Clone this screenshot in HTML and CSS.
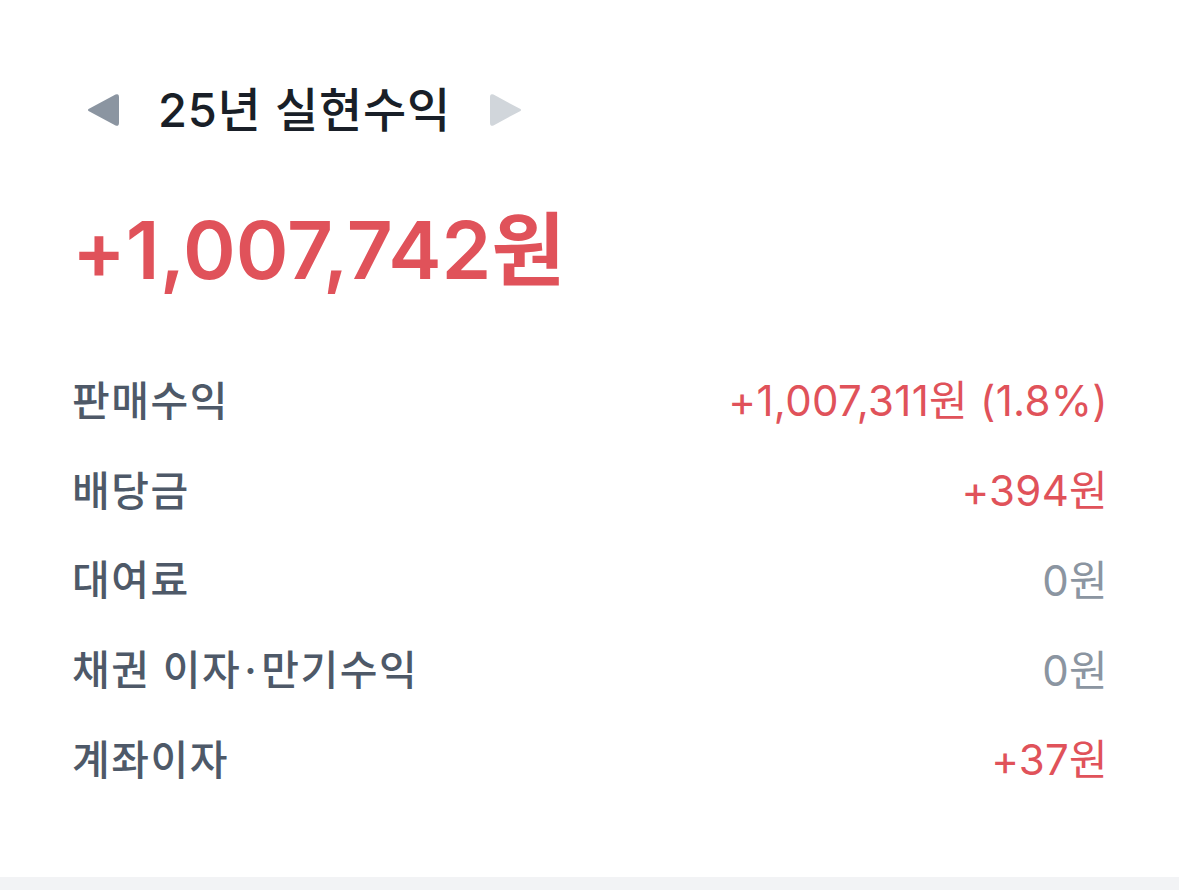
FILE: index.html
```html
<!DOCTYPE html>
<html lang="ko">
<head>
<meta charset="utf-8">
<link rel="stylesheet" href="styles.css">
</head>
<body>
<div class="card">
  <div class="header">
    <button class="nav prev" aria-label="이전">
      <svg width="34" height="36" viewBox="0 0 34 36"><path d="M3 18 L30 3.5 Q32 2.5 32 5 L32 31 Q32 33.5 30 32.5 Z" fill="#8b95a1" stroke="#8b95a1" stroke-width="2" stroke-linejoin="round"/></svg>
    </button>
    <h1 class="title">25년 실현수익</h1>
    <button class="nav next" aria-label="다음">
      <svg width="34" height="36" viewBox="0 0 34 36"><path d="M31 18 L4 3.5 Q2 2.5 2 5 L2 31 Q2 33.5 4 32.5 Z" fill="#d1d6db" stroke="#d1d6db" stroke-width="2" stroke-linejoin="round"/></svg>
    </button>
  </div>
  <div class="total">+1,007,742원</div>
  <ul class="rows">
    <li class="row"><span class="label">판매수익</span><span class="value plus">+1,007,311원 (1.8%)</span></li>
    <li class="row"><span class="label">배당금</span><span class="value plus">+394원</span></li>
    <li class="row"><span class="label">대여료</span><span class="value zero">0원</span></li>
    <li class="row"><span class="label">채권 이자<span class="dot">·</span>만기수익</span><span class="value zero">0원</span></li>
    <li class="row"><span class="label">계좌이자</span><span class="value plus">+37원</span></li>
  </ul>
</div>
<div class="footer-band"></div>
</body>
</html>
```
FILE: styles.css
```css
html, body {
  margin: 0;
  padding: 0;
  background: #ffffff;
}
body {
  font-family: "Inter", "Noto Sans CJK KR", sans-serif;
  width: 1179px;
  height: 890px;
  overflow: hidden;
  display: flex;
  flex-direction: column;
}
.card {
  height: 877px;
  box-sizing: border-box;
  padding: 78px 71px 0 72px;
}
.header {
  display: flex;
  align-items: center;
  margin-left: 14px;
}
.nav {
  border: 0;
  background: none;
  padding: 0;
  display: flex;
  align-items: center;
}
.title {
  margin: 0 0 0 38px;
  font-size: 47px;
  font-weight: 500;
  color: #191f28;
  line-height: 64px;
  letter-spacing: 0.8px;
}
.next {
  margin-left: 38px;
}
.total {
  margin-top: 53px;
  margin-left: 0;
  font-size: 80px;
  font-weight: 600;
  color: #e0525a;
  line-height: 110px;
  letter-spacing: 0;
}
.rows {
  list-style: none;
  margin: 48px 0 0 0;
  padding: 0;
}
.row {
  display: flex;
  justify-content: space-between;
  align-items: center;
  height: 89.75px;
  font-size: 41px;
}
.label {
  color: #4e5968;
  font-weight: 500;
  letter-spacing: 1.5px;
}
.dot {
  margin: 0 3px;
}
.value {
  font-size: 42px;
  font-weight: 400;
  letter-spacing: 0.3px;
}
.plus { color: #e0525a; }
.zero { color: #8b95a1; }
.footer-band {
  flex: 1;
  background: #f2f3f5;
}
```
